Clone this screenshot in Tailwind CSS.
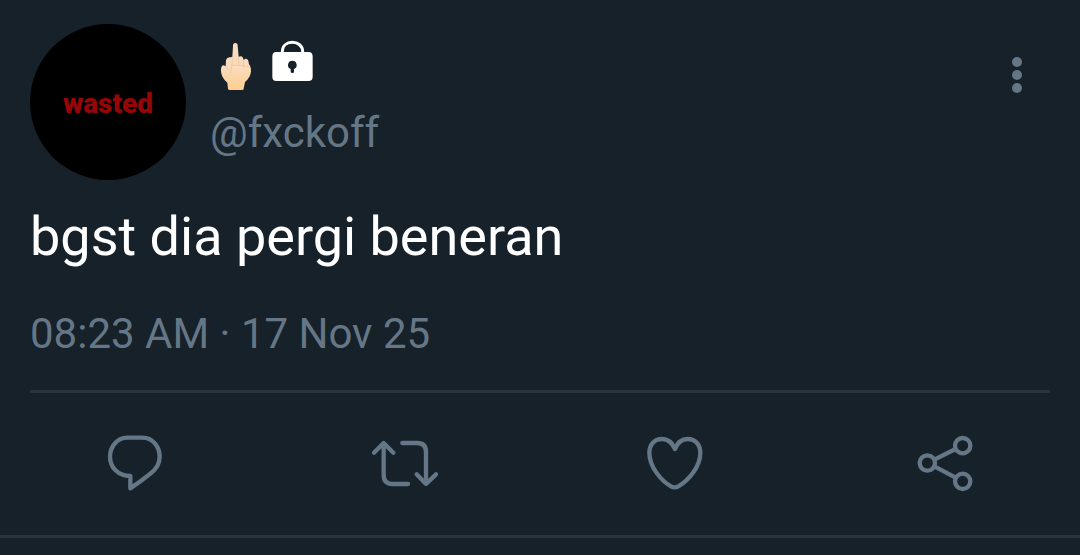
<!DOCTYPE html>
<html lang="id">
  <head>
    <meta charset="UTF-8" />
    <meta name="viewport" content="width=device-width, initial-scale=1.0" />
    <title>Tweet</title>
    <script src="https://cdn.jsdelivr.net/npm/@tailwindcss/browser@4"></script>
  </head>
  <body class="bg-[#16212a] text-[#657786] font-['Roboto',sans-serif]">
    <article class="border-b-3 border-[#2a343a]">
      <div class="px-[30px] pt-6">
        <header class="flex items-start">
          <div
            class="size-[156px] shrink-0 rounded-full bg-black flex items-center justify-center"
          >
            <span class="pt-1 text-[28px] leading-8 font-black text-[#960508]">wasted</span>
          </div>
          <div class="ml-6 pt-4 flex-1">
            <div class="flex items-start gap-5 pl-[10px] h-[69px]">
              <!-- middle finger emoji -->
              <svg class="w-8 h-[50px]" viewBox="0 0 96 150" role="img" aria-label="Middle finger">
                <defs>
                  <linearGradient id="skin" x1="0" y1="0" x2="0" y2="1">
                    <stop offset="0.5" stop-color="#fadcbc" />
                    <stop offset="0.8" stop-color="#fdd3a2" />
                    <stop offset="1" stop-color="#ffcd90" />
                  </linearGradient>
                </defs>
                <path
                  fill="url(#skin)"
                  d="M39 17Q39 9 46 9Q53 9 53 17L56 50Q64 46 69 53L71 60Q80 52 85 62L87 73Q93 79 93 94Q92 112 75 126L71 146Q71 150 66 150H29Q25 150 24 146L22 128Q4 114 3 94Q2 79 9 76Q13 76 17 79L18 60Q21 50 32 52L37 50Z"
                />
                <path
                  fill="none"
                  stroke="#e8bf95"
                  stroke-width="2"
                  stroke-linecap="round"
                  d="M37 52L36 76M55 52L56 75M70 60L71 79M17 79Q24 81 25 90M36 76Q45 73 55 77Q63 74 71 80Q79 76 86 80M34 78Q37 91 30 99"
                />
              </svg>
              <!-- protected account -->
              <svg class="w-[41px] h-[42px]" viewBox="0 0 123 126" role="img" aria-label="Locked">
                <path
                  fill="none"
                  stroke="#fff"
                  stroke-width="9"
                  d="M31 42V35C31 17 44 7 61 7S92 17 92 35V42"
                />
                <path
                  fill="#fff"
                  fill-rule="evenodd"
                  d="M13 36H109Q122 36 122 49V110Q122 123 109 123H13Q1 123 1 110V49Q1 36 13 36ZM61 62A13 13 0 0 0 56 87V95Q56 99 61 99T66 95V87A13 13 0 0 0 61 62Z"
                />
              </svg>
            </div>
            <a href="#" class="block text-[42px] leading-12">@fxckoff</a>
          </div>
          <button type="button" class="w-[66px] h-[102px] flex items-center justify-center" aria-label="More">
            <svg class="w-3 h-10" viewBox="0 0 12 40" fill="currentColor">
              <circle cx="6" cy="7" r="5" />
              <circle cx="6" cy="20" r="5" />
              <circle cx="6" cy="33" r="5" />
            </svg>
          </button>
        </header>

        <p class="mt-[25px] text-[54px] leading-16 text-white">bgst dia pergi beneran</p>
        <p class="mt-[41px] text-[42px] leading-12">
          <time datetime="2025-11-17T08:23">08:23 AM · 17 Nov 25</time>
        </p>
        <hr class="mt-8 border-t-3 border-[#2a343a]" />
      </div>

      <div class="grid grid-cols-4 justify-items-center pt-[27px] pb-[25px]">
        <button type="button" aria-label="Reply">
          <svg
            class="size-[90px]"
            viewBox="0 0 270 270"
            fill="none"
            stroke="currentColor"
            stroke-width="13"
            stroke-linejoin="round"
          >
            <path d="M112 53H157C188 53 209 80 209 110C209 132 199 147 181 161Q156 182 121 205V168C84 168 60 142 60 110C60 78 83 53 112 53Z" />
          </svg>
        </button>
        <button type="button" aria-label="Retweet">
          <svg
            class="size-[90px]"
            viewBox="0 0 270 270"
            fill="none"
            stroke="currentColor"
            stroke-width="13"
            stroke-linecap="round"
            stroke-linejoin="round"
          >
            <path d="M42 98L71 69L100 98M71 70V165Q71 192 98 192H144" />
            <path d="M127 69H171Q198 69 198 96V191M170 163L198 192L228 163" />
          </svg>
        </button>
        <button type="button" aria-label="Like">
          <svg
            class="size-[90px]"
            viewBox="0 0 270 270"
            fill="none"
            stroke="currentColor"
            stroke-width="13"
            stroke-linejoin="round"
          >
            <path d="M135 87C127 69 113 57 96 57C72 57 58 75 58 98C58 140 93 182 123 199Q134 205 145 199C176 181 211 140 211 98C211 75 197 57 173 57C156 57 142 69 135 87Z" />
          </svg>
        </button>
        <button type="button" aria-label="Share">
          <svg
            class="size-[90px]"
            viewBox="0 0 270 270"
            fill="none"
            stroke="currentColor"
            stroke-width="13"
          >
            <circle cx="82" cy="129" r="23" />
            <circle cx="188" cy="77" r="23" />
            <circle cx="188" cy="184" r="23" />
            <path d="M103 119L167 87M103 139L167 173" />
          </svg>
        </button>
      </div>
    </article>
  </body>
</html>
